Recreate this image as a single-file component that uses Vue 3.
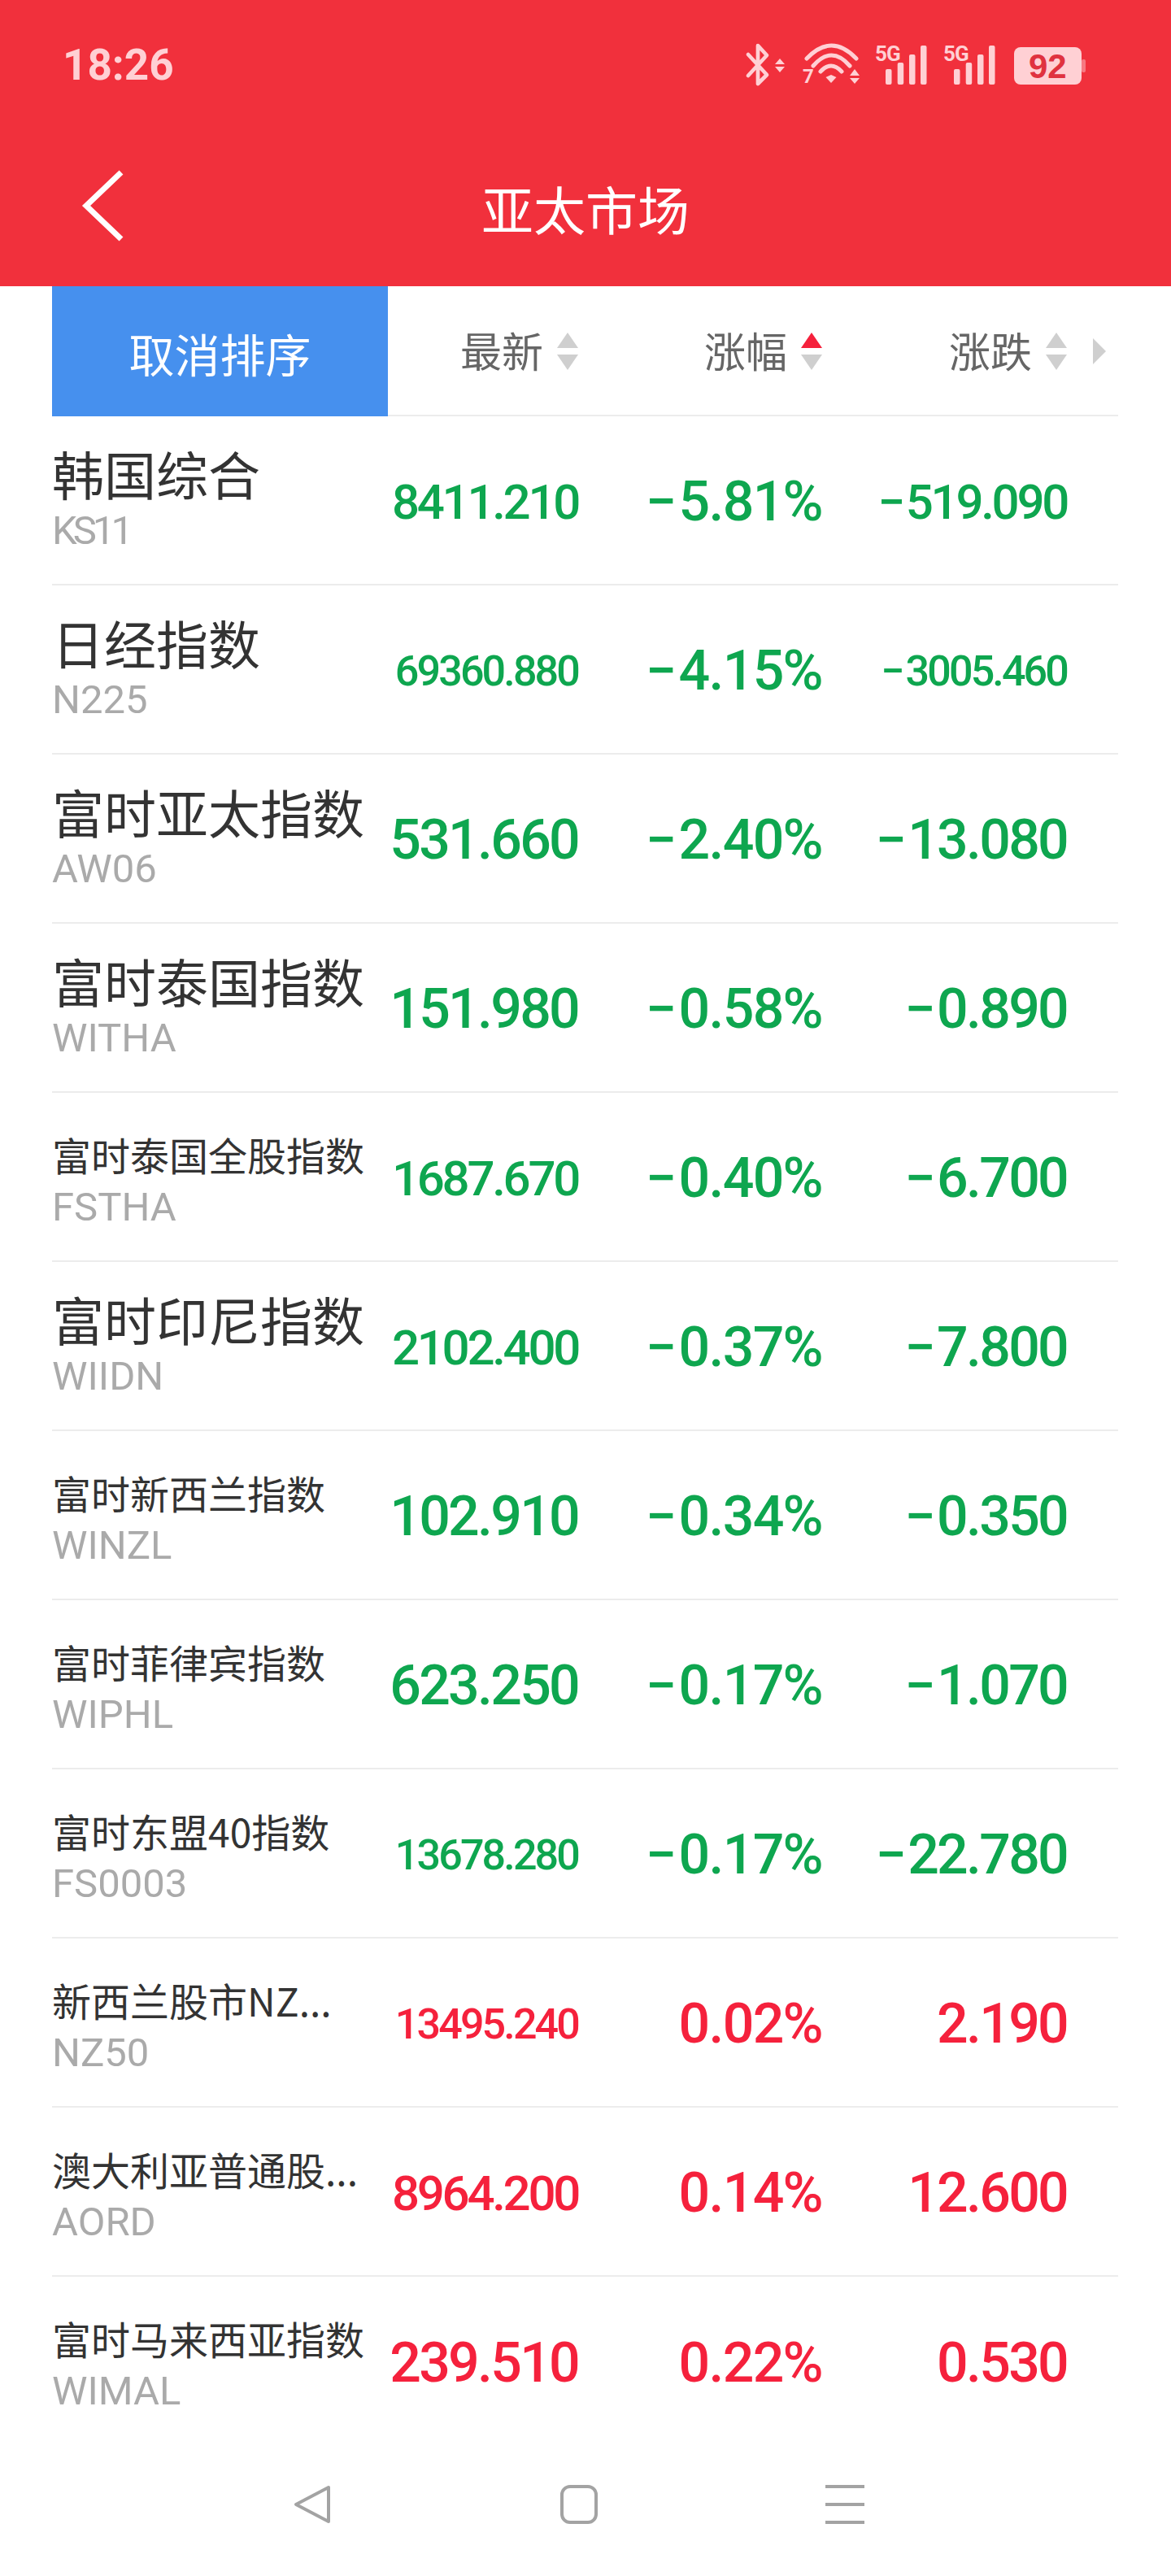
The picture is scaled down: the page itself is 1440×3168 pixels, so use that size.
<script setup>
const rows = [
  { name: '韩国综合', big: true, code: 'KS11', tight: true, last: '8411.210', pct: '−5.81%', chg: '−519.090', c: 'fall' },
  { name: '日经指数', big: true, code: 'N225', last: '69360.880', pct: '−4.15%', chg: '−3005.460', c: 'fall' },
  { name: '富时亚太指数', big: true, code: 'AW06', last: '531.660', pct: '−2.40%', chg: '−13.080', c: 'fall' },
  { name: '富时泰国指数', big: true, code: 'WITHA', last: '151.980', pct: '−0.58%', chg: '−0.890', c: 'fall' },
  { name: '富时泰国全股指数', code: 'FSTHA', last: '1687.670', pct: '−0.40%', chg: '−6.700', c: 'fall' },
  { name: '富时印尼指数', big: true, code: 'WIIDN', last: '2102.400', pct: '−0.37%', chg: '−7.800', c: 'fall' },
  { name: '富时新西兰指数', code: 'WINZL', last: '102.910', pct: '−0.34%', chg: '−0.350', c: 'fall' },
  { name: '富时菲律宾指数', code: 'WIPHL', last: '623.250', pct: '−0.17%', chg: '−1.070', c: 'fall' },
  { name: '富时东盟40指数', code: 'FS0003', last: '13678.280', pct: '−0.17%', chg: '−22.780', c: 'fall' },
  { name: '新西兰股市NZ...', code: 'NZ50', last: '13495.240', pct: '0.02%', chg: '2.190', c: 'rise' },
  { name: '澳大利亚普通股...', code: 'AORD', last: '8964.200', pct: '0.14%', chg: '12.600', c: 'rise' },
  { name: '富时马来西亚指数', code: 'WIMAL', last: '239.510', pct: '0.22%', chg: '0.530', c: 'rise' },
]
const heads = [
  { label: '最新', active: false },
  { label: '涨幅', active: true },
  { label: '涨跌', active: false },
]
function fit(s) {
  if (s.length >= 9) return 'fs-s'
  if (s.length >= 8) return 'fs-m'
  return 'fs-l'
}
const isNeg = (s) => s.startsWith('−')
const abs = (s) => s.replace('−', '')
const bars = [
  { x: 0, y: 55, h: 19 },
  { x: 14.7, y: 47, h: 27 },
  { x: 29, y: 37, h: 37 },
  { x: 43, y: 26, h: 48 },
]
</script>

<template>
  <div class="page">
    <header class="top">
      <div class="status">
        <span class="time">18:26</span>
        <svg class="status-icons" viewBox="0 0 480 90" width="480" height="90" fill="#ffd0d4">
          <path d="M40 37 L63 62 L52 73 V26 L63 38 L40 63" fill="none" stroke="#ffd0d4" stroke-width="4.7" stroke-linejoin="round" stroke-linecap="round" />
          <path d="M73 49 L79 42 L85 49Z M73 52 L85 52 L79 59Z" />
          <path d="M112 42 Q142.500 10 173 42" fill="none" stroke="#ffd0d4" stroke-width="5" stroke-linecap="round" />
          <path d="M120 51 Q142.500 25 165 51" fill="none" stroke="#ffd0d4" stroke-width="5" stroke-linecap="round" />
          <path d="M129 58 Q142 44 155 58" fill="none" stroke="#ffd0d4" stroke-width="5" stroke-linecap="round" />
          <path d="M135.500 65 L142 62 L148.500 65 L142 72Z" />
          <text x="107" y="72" class="st-small">7</text>
          <path d="M165 63 L171 55 L177 63Z M165 66 L177 66 L171 73Z" />
          <g v-for="off in [0, 84]" :key="off" :transform="`translate(${off} 0)`">
            <text x="196" y="45" class="st-5g">5G</text>
            <rect v-for="b in bars" :key="b.x" :x="209 + b.x" :y="b.y" width="7.500" :height="b.h" rx="2" />
          </g>
          <rect x="367" y="28" width="83" height="46" rx="8" />
          <rect x="450" y="43" width="5" height="16" rx="2" opacity="0.45" />
          <text x="385" y="66" class="st-batt">92</text>
        </svg>
      </div>
      <div class="title-row">
        <svg class="back" width="60" height="92" viewBox="0 0 60 92">
          <path d="M50 5 L7 46 L50 87" fill="none" stroke="#fff" stroke-width="7" />
        </svg>
        <h1 class="title">亚太市场</h1>
      </div>
    </header>

    <main class="table">
      <div class="grid head">
        <div class="cancel">取消排序</div>
        <div v-for="h in heads" :key="h.label" class="th">
          <span>{{ h.label }}</span>
          <span class="sort">
            <i class="tri up" :class="{ on: h.active }"></i>
            <i class="tri dn"></i>
          </span>
        </div>
        <i class="more"></i>
      </div>
      <div v-for="r in rows" :key="r.code" class="grid row">
        <div class="id">
          <div class="name" :class="{ big: r.big }">{{ r.name }}</div>
          <div class="code" :class="{ tight: r.tight }">{{ r.code }}</div>
        </div>
        <div class="num" :class="[r.c, fit(r.last)]">{{ r.last }}</div>
        <div class="num pct fs-l" :class="r.c"><span v-if="isNeg(r.pct)" class="sign">−</span>{{ abs(r.pct) }}</div>
        <div class="num" :class="[r.c, fit(r.chg)]"><span v-if="isNeg(r.chg)" class="sign">−</span>{{ abs(r.chg) }}</div>
      </div>
    </main>

    <footer class="nav">
      <svg width="48" height="48" viewBox="0 0 48 48"><path d="M43 3 V45 L3 24Z" fill="none" stroke="#a3a3a3" stroke-width="4" stroke-linejoin="round" /></svg>
      <svg width="46" height="48" viewBox="0 0 46 48"><rect x="2" y="2" width="42" height="44" rx="10" fill="none" stroke="#a3a3a3" stroke-width="4" /></svg>
      <svg width="48" height="48" viewBox="0 0 48 48"><path d="M0 2 H48 M0 24 H48 M0 46 H48" stroke="#a3a3a3" stroke-width="4" /></svg>
    </footer>
  </div>
</template>

<style>
html, body { margin: 0; background: #fff; }
</style>

<style scoped>
.page {
  width: 1440px;
  height: 3168px;
  background: #fff;
  overflow: hidden;
  font-family: Roboto, "Noto Sans CJK SC", sans-serif;
  display: flex;
  flex-direction: column;
}
.top {
  height: 352px;
  background: #f1303c;
  display: flex;
  flex-direction: column;
}
.status {
  display: flex;
  justify-content: space-between;
  align-items: flex-start;
  padding: 30px 80px 0 77px;
  height: 90px;
}
.time {
  font-size: 53px;
  font-weight: 700;
  line-height: 100px;
  color: #ffd0d4;
}
.status-icons { display: block; }
.st-5g { font: 700 26px Roboto, sans-serif; letter-spacing: -1px; }
.st-small { font: 700 24px Roboto, sans-serif; }
.st-batt { font: 700 42px "Liberation Sans", sans-serif; fill: #e0323f; }
.title-row {
  position: relative;
  display: flex;
  justify-content: center;
  padding-top: 91px;
}
.back {
  position: absolute;
  left: 99px;
  top: 87px;
}
.title {
  margin: 0;
  font: 400 64px/88px "Noto Sans CJK SC", sans-serif;
  color: #fff;
}
.table { padding: 0 65px 0 64px; }
.grid {
  display: grid;
  grid-template-columns: 413px 234px 300px 301px 63px;
  border-bottom: 2px solid #ececec;
}
.head { height: 160px; box-sizing: border-box; align-items: center; }
.cancel {
  align-self: stretch;
  height: 160px;
  box-sizing: border-box;
  padding-top: 3px;
  background: #4690ee;
  color: #fff;
  font: 400 56px/157px "Noto Sans CJK SC", sans-serif;
  text-align: center;
}
.th {
  display: flex;
  justify-content: flex-end;
  align-items: center;
  gap: 17px;
  font: 400 51px/60px "Noto Sans CJK SC", sans-serif;
  color: #666;
}
.th span:first-child { position: relative; top: -2px; }
.sort { display: flex; flex-direction: column; gap: 8px; }
.tri {
  display: block;
  width: 0;
  height: 0;
  border-left: 13px solid transparent;
  border-right: 13px solid transparent;
}
.tri.up { border-bottom: 19px solid #cfcfcf; }
.tri.up.on { border-bottom-color: #f5213c; }
.tri.dn { border-top: 19px solid #cfcfcf; }
.more {
  justify-self: start;
  margin-left: 32px;
  width: 0;
  height: 0;
  border-top: 16px solid transparent;
  border-bottom: 16px solid transparent;
  border-left: 16px solid #cfcfcf;
}
.row {
  height: 208px;
  box-sizing: border-box;
  align-items: center;
}
.row:last-of-type { border-bottom: 0; }
.id { align-self: start; padding-top: 31px; white-space: nowrap; }
.name {
  height: 80px;
  font: 400 48px/88px "Noto Sans CJK SC", sans-serif;
  color: #333;
}
.name.big { font-size: 64px; line-height: 76px; }
.code {
  font-size: 49px;
  line-height: 60px;
  color: #aaa;
}
.code.tight { letter-spacing: -5px; }
.num {
  text-align: right;
  font-weight: 500;
  letter-spacing: -0.04em;
  white-space: nowrap;
  padding-top: 4px;
}
.num.pct { letter-spacing: -0.025em; }
.sign { margin-right: 4px; }
.fs-l { font-size: 68px; }
.fs-m { font-size: 60px; letter-spacing: -0.055em; }
.fs-s { font-size: 52px; letter-spacing: -0.055em; }
.fall { color: #0ea64f; }
.rise { color: #f5213c; }
.nav {
  display: flex;
  align-items: flex-start;
  gap: 280px;
  padding: 48px 0 0 361px;
}
</style>
